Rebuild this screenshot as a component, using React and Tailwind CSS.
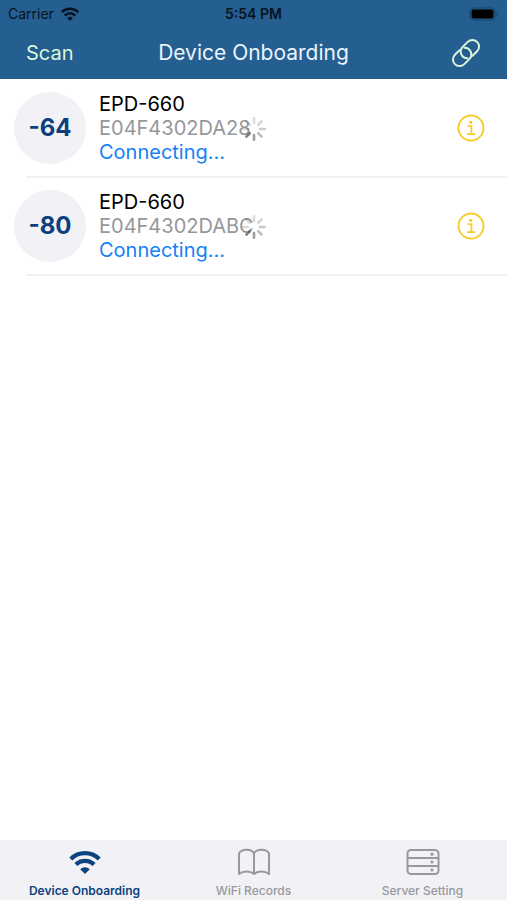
import React from "react";

const devices = [
  { id: "E04F4302DA28", name: "EPD-660", rssi: -64, status: "Connecting..." },
  { id: "E04F4302DABC", name: "EPD-660", rssi: -80, status: "Connecting..." },
];

const WifiIcon = ({ className }) => (
  <svg viewBox="0 0 32 24" className={className} fill="none" stroke="currentColor" aria-hidden="true">
    <path d="M1.8 9 A20.2 20.2 0 0 1 30.2 9" strokeWidth="4.2" />
    <path d="M6.9 14.6 A12.8 12.8 0 0 1 25.1 14.6" strokeWidth="4.2" />
    <path d="M16 24 L11.2 19.3 A6.8 6.8 0 0 1 20.8 19.3 Z" fill="currentColor" stroke="none" />
  </svg>
);

const BatteryIcon = () => (
  <svg viewBox="0 0 30 14" className="h-3.5 w-7.5" aria-hidden="true">
    <rect x="1" y="1" width="25" height="12" rx="3.5" fill="none" stroke="#174468" strokeWidth="1" />
    <rect x="2.5" y="2.5" width="22" height="9" rx="2" fill="#000" />
    <path d="M27.5 5 v4 q1.6 -0.6 1.6 -2 t-1.6 -2z" fill="#174468" />
  </svg>
);

const LinkIcon = () => (
  <svg viewBox="0 0 30 30" className="size-7.5" fill="none" stroke="currentColor" strokeWidth="2" strokeLinecap="round" aria-hidden="true">
    <path d="M21.6 17.7 L26.1 13.3 A6.6 6.6 0 0 0 16.7 3.9 L11.7 8.9 A6.6 6.6 0 0 0 16.4 20.2" />
    <path d="M8.4 12.3 L3.9 16.7 A6.6 6.6 0 0 0 13.3 26.1 L18.3 21.1 A6.6 6.6 0 0 0 13.6 9.8" />
  </svg>
);

const InfoIcon = () => (
  <svg viewBox="0 0 28 28" className="size-7" fill="none" stroke="currentColor" aria-hidden="true">
    <circle cx="14" cy="14" r="12.5" strokeWidth="1.9" />
    <circle cx="13.7" cy="8.3" r="1.6" fill="currentColor" stroke="none" />
    <path d="M11.4 12.2 H14.4 V20 M10.8 20.2 H17.6" strokeWidth="1.8" strokeLinecap="round" />
  </svg>
);

const BookIcon = () => (
  <svg viewBox="0 0 34 28" className="h-7 w-8.5" fill="none" stroke="currentColor" strokeWidth="2" strokeLinejoin="round" aria-hidden="true">
    <path d="M17 5.5 C14.5 0.6 5 0.6 2 5.2 V26 C6 22.6 13 22.6 17 26 C21 22.6 28 22.6 32 26 V5.2 C29 0.6 19.5 0.6 17 5.5 Z" />
    <path d="M17 5.5 V26" />
  </svg>
);

const ServerIcon = () => (
  <svg viewBox="0 0 34 28" className="h-7 w-8.5" fill="none" stroke="currentColor" strokeWidth="2" aria-hidden="true">
    <rect x="1.5" y="2" width="31" height="24" rx="3.5" />
    <path d="M1.5 10 H32.5 M1.5 18 H32.5" />
    <g fill="currentColor" stroke="none">
      <circle cx="26" cy="6.2" r="1.6" />
      <circle cx="26" cy="14" r="1.6" />
      <circle cx="26" cy="22" r="1.6" />
    </g>
  </svg>
);

// Opacity of each spoke, clockwise from the top
const spokes = [0.22, 0.25, 0.32, 0.4, 0.6, 0.8, 0.22, 0.22];

const Spinner = () => (
  <svg viewBox="0 0 26 26" className="size-6.5" stroke="#5f5f66" strokeWidth="2.6" strokeLinecap="round" role="img" aria-label="Loading">
    {spokes.map((opacity, i) => (
      <path key={i} d="M13 2.3 V7" opacity={opacity} transform={`rotate(${i * 45} 13 13)`} />
    ))}
  </svg>
);

const DeviceRow = ({ device }) => (
  <li className="relative">
    <div className="flex items-center py-3 pr-5.5 pl-3.5">
      <div className="flex size-18 shrink-0 items-center justify-center rounded-full bg-[#f1f1f6] text-2xl font-bold text-[#0b3f7d]">
        {device.rssi}
      </div>
      <div className="ml-[13px] flex-1 text-xl leading-6">
        <p className="text-black">{device.name}</p>
        <p className="text-[#97979b]">{device.id}</p>
        <p className="text-[#1581f5]">{device.status}</p>
      </div>
      <button type="button" aria-label="Device info" className="text-[#f6cd2b]">
        <InfoIcon />
      </button>
    </div>
    <div className="pointer-events-none absolute inset-0 flex items-center justify-center">
      <Spinner />
    </div>
    <div className="ml-6.5 h-0.5 bg-[#f1f1f2]" />
  </li>
);

const tabs = [
  { label: "Device Onboarding", icon: <WifiIcon className="h-6 w-8" />, active: true },
  { label: "WiFi Records", icon: <BookIcon /> },
  { label: "Server Setting", icon: <ServerIcon /> },
];

export default function App() {
  return (
    <div className="flex min-h-screen flex-col bg-white font-['Inter',sans-serif]">
      <header className="bg-[#255e91] pb-px">
        <div className="grid grid-cols-3 items-center px-2 pt-1.5 text-sm leading-4 text-[#07131d]">
          <div className="flex items-center gap-1.5">
            <span>Carrier</span>
            <WifiIcon className="h-3.5 w-5" />
          </div>
          <span className="text-center font-semibold">5:54 PM</span>
          <div className="flex justify-end">
            <BatteryIcon />
          </div>
        </div>
        <div className="grid h-14 grid-cols-[1fr_auto_1fr] items-center px-6.5 pt-1.5 text-xl">
          <button type="button" className="justify-self-start text-[#dcf6d8]">
            Scan
          </button>
          <h1 className="text-[21px] text-[#eaf3fb]">Device Onboarding</h1>
          <button type="button" aria-label="Link device" className="justify-self-end text-[#dcf6d8]">
            <LinkIcon />
          </button>
        </div>
      </header>

      <main className="flex-1 pt-px">
        <ul>
          {devices.map((device) => (
            <DeviceRow key={device.id} device={device} />
          ))}
        </ul>
      </main>

      <nav className="grid grid-cols-3 bg-[#f1f1f6] pt-2">
        {tabs.map((tab) => (
          <button
            key={tab.label}
            type="button"
            className={`flex flex-col items-center text-xs ${
              tab.active ? "font-semibold text-[#0b437f]" : "font-medium text-[#98989d]"
            }`}
          >
            <span className="flex h-7 items-center">{tab.icon}</span>
            <span className="mt-1.5 leading-4.5">{tab.label}</span>
          </button>
        ))}
      </nav>
    </div>
  );
}
